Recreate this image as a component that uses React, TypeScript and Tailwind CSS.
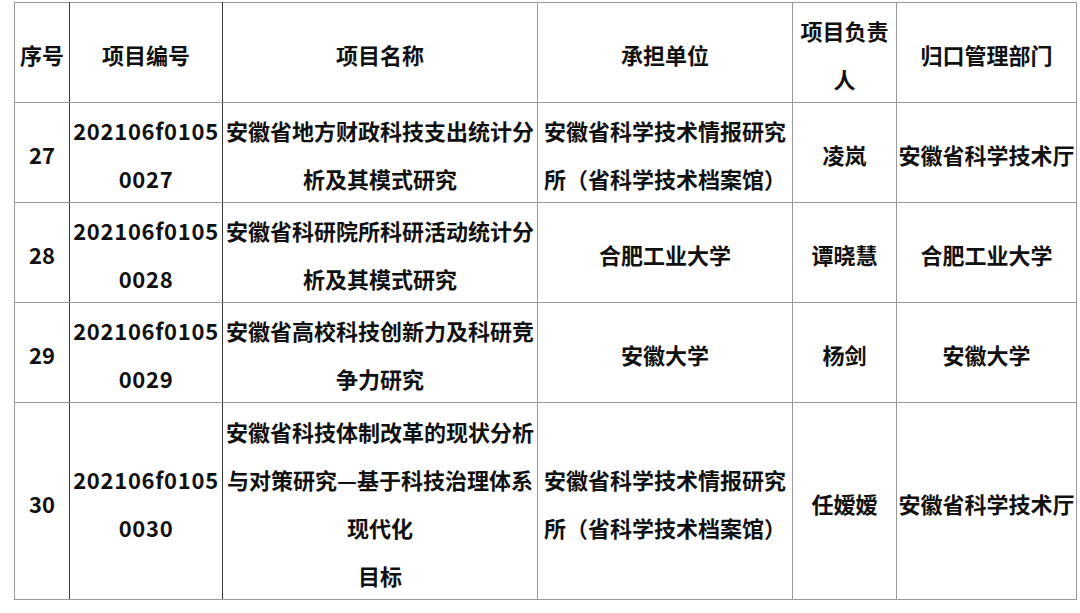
import React from "react";

const font = { fontFamily: '"Noto Sans CJK SC", "Noto Sans", sans-serif' };

type Row = { no: string; code: string[]; name: string[]; unit: string[]; lead: string; dept: string; h: string };

const rows: Row[] = [
  { no: "27", code: ["202106f0105", "0027"], name: ["安徽省地方财政科技支出统计分", "析及其模式研究"], unit: ["安徽省科学技术情报研究", "所（省科学技术档案馆）"], lead: "凌岚", dept: "安徽省科学技术厅", h: "h-[100px]" },
  { no: "28", code: ["202106f0105", "0028"], name: ["安徽省科研院所科研活动统计分", "析及其模式研究"], unit: ["合肥工业大学"], lead: "谭晓慧", dept: "合肥工业大学", h: "h-[100px]" },
  { no: "29", code: ["202106f0105", "0029"], name: ["安徽省高校科技创新力及科研竞", "争力研究"], unit: ["安徽大学"], lead: "杨剑", dept: "安徽大学", h: "h-[100px]" },
  { no: "30", code: ["202106f0105", "0030"], name: ["安徽省科技体制改革的现状分析", "与对策研究—基于科技治理体系", "现代化", "目标"], unit: ["安徽省科学技术情报研究", "所（省科学技术档案馆）"], lead: "任嫒嫒", dept: "安徽省科学技术厅", h: "h-[197px]" },
];

const Lines = ({ l }: { l: string[] }) => (
  <>
    {l.map((s, i) => (
      <div key={i}>{s}</div>
    ))}
  </>
);

const cellG = "border border-[#9a9a9a] text-center align-middle p-0 pt-[3px] whitespace-nowrap overflow-hidden";
const darkR = "border-r-[#3a3a3a]";

export default function App() {
  return (
    <div className="w-[1080px] h-[613px] bg-white pt-[2px] pl-[14px]" style={font}>
      <table className="table-fixed border-collapse text-[22px] leading-[48px] font-bold text-[#111] w-[1063px]">
        <colgroup>
          <col className="w-[55px]" />
          <col className="w-[153px]" />
          <col className="w-[315px]" />
          <col className="w-[255px]" />
          <col className="w-[104px]" />
          <col className="w-[180px]" />
        </colgroup>
        <thead>
          <tr className="h-[99px]">
            <th className={`${cellG} ${darkR}`}>序号</th>
            <th className={`${cellG} ${darkR}`}>项目编号</th>
            <th className={cellG}>项目名称</th>
            <th className={cellG}>承担单位</th>
            <th className={cellG}>
              <div>项目负责</div>
              <div>人</div>
            </th>
            <th className={cellG}>归口管理部门</th>
          </tr>
        </thead>
        <tbody>
          {rows.map((r) => (
            <tr key={r.no} className={r.h}>
              <td className={`${cellG} ${darkR}`}>{r.no}</td>
              <td className={`${cellG} ${darkR} tracking-[0.7px]`}>
                <Lines l={r.code} />
              </td>
              <td className={cellG}>
                <Lines l={r.name} />
              </td>
              <td className={cellG}>
                <Lines l={r.unit} />
              </td>
              <td className={cellG}>{r.lead}</td>
              <td className={cellG}>{r.dept}</td>
            </tr>
          ))}
        </tbody>
      </table>
    </div>
  );
}
